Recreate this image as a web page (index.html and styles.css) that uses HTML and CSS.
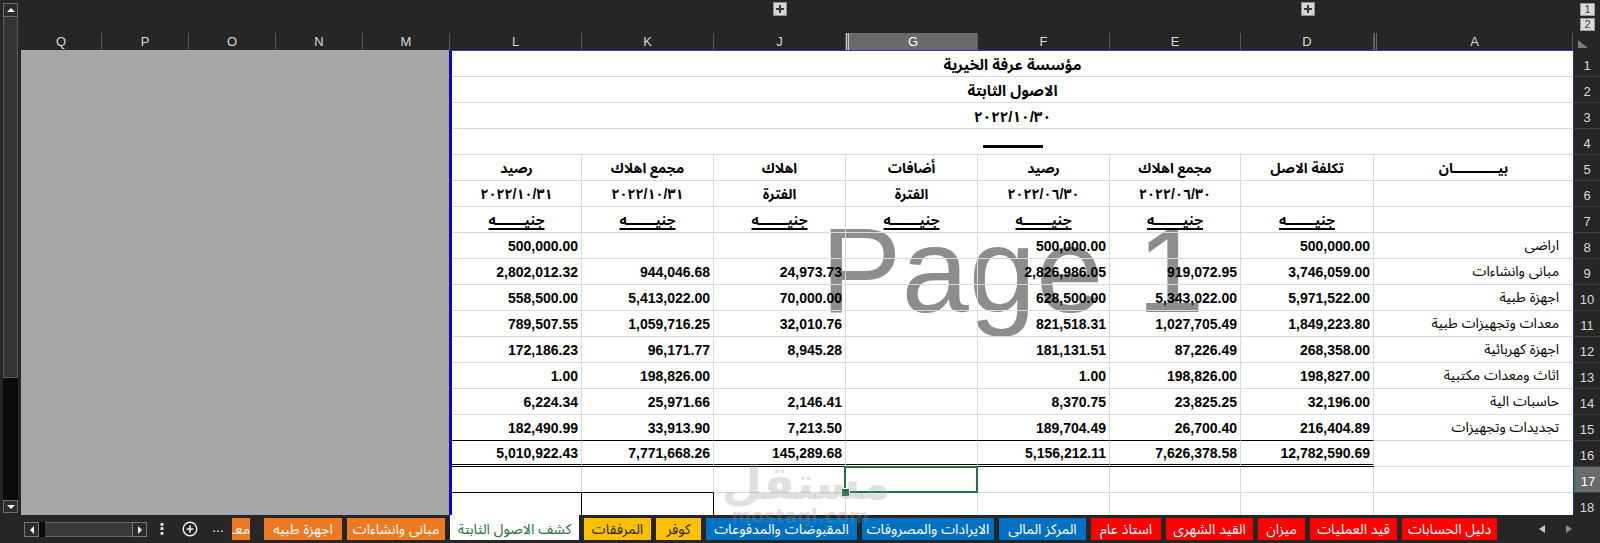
FILE: index.html
```html
<!DOCTYPE html>
<html lang="ar">
<head>
<meta charset="utf-8">
<title>كشف الاصول الثابتة</title>
<link rel="stylesheet" href="styles.css">
</head>
<body>
<div class="window">
  <div class="main">
    <div class="vscroll">
      <div class="vs-btn vs-up"></div>
      <div class="vs-thumb"></div>
      <div class="vs-track"></div>
      <div class="vs-btn vs-down"></div>
    </div>
    <div class="content">
      <div class="outline-bar">
        <div class="ob-plus ob-j"><svg width="12" height="12" viewBox="0 0 12 12"><path d="M2 6h8M6 2v8" stroke="#3a3a3a" stroke-width="2"/></svg></div>
        <div class="ob-plus ob-d"><svg width="12" height="12" viewBox="0 0 12 12"><path d="M2 6h8M6 2v8" stroke="#3a3a3a" stroke-width="2"/></svg></div>
        <div class="ob-levels">
          <div class="ob-lv">1</div>
          <div class="ob-lv">2</div>
        </div>
      </div>
      <div class="col-headers">
        <div class="ch">Q</div>
        <div class="ch">P</div>
        <div class="ch">O</div>
        <div class="ch">N</div>
        <div class="ch">M</div>
        <div class="ch">L</div>
        <div class="ch">K</div>
        <div class="ch">J</div>
        <div class="ch ch-sel">G</div>
        <div class="ch">F</div>
        <div class="ch">E</div>
        <div class="ch">D</div>
        <div class="ch ch-hidden">A</div>
        <div class="ch ch-corner"><svg width="10" height="8" viewBox="0 0 10 8"><path d="M0 0L10 8H0Z" fill="#7c7c7c"/></svg></div>
      </div>
      <div class="sheet-area">
        <div class="grey"></div>
        <div class="page">
          <div class="page-wm">Page 1</div>

          <div class="c title">مؤسسة عرفة الخيرية</div>
          <div class="c title">الاصول الثابتة</div>
          <div class="c title">٢٠٢٢/١٠/٣٠</div>
          <div class="c title title-rule"><div class="rule"></div></div>

          <div class="c hd">رصيد</div>
          <div class="c hd">مجمع اهلاك</div>
          <div class="c hd">اهلاك</div>
          <div class="c hd">أضافات</div>
          <div class="c hd">رصيد</div>
          <div class="c hd">مجمع اهلاك</div>
          <div class="c hd">تكلفة الاصل</div>
          <div class="c hd last">بيـــــــــــان</div>

          <div class="c hd">٢٠٢٢/١٠/٣١</div>
          <div class="c hd">٢٠٢٢/١٠/٣١</div>
          <div class="c hd">الفترة</div>
          <div class="c hd">الفترة</div>
          <div class="c hd">٢٠٢٢/٠٦/٣٠</div>
          <div class="c hd">٢٠٢٢/٠٦/٣٠</div>
          <div class="c hd"></div>
          <div class="c hd last"></div>

          <div class="c hd unit"><span>جنيـــــــه</span></div>
          <div class="c hd unit"><span>جنيـــــــه</span></div>
          <div class="c hd unit"><span>جنيـــــــه</span></div>
          <div class="c hd unit"><span>جنيـــــــه</span></div>
          <div class="c hd unit"><span>جنيـــــــه</span></div>
          <div class="c hd unit"><span>جنيـــــــه</span></div>
          <div class="c hd unit"><span>جنيـــــــه</span></div>
          <div class="c hd last"></div>

          <div class="c num">500,000.00</div>
          <div class="c num"></div>
          <div class="c num"></div>
          <div class="c num"></div>
          <div class="c num">500,000.00</div>
          <div class="c num"></div>
          <div class="c num">500,000.00</div>
          <div class="c lbl last">اراضى</div>

          <div class="c num">2,802,012.32</div>
          <div class="c num">944,046.68</div>
          <div class="c num">24,973.73</div>
          <div class="c num"></div>
          <div class="c num">2,826,986.05</div>
          <div class="c num">919,072.95</div>
          <div class="c num">3,746,059.00</div>
          <div class="c lbl last">مبانى وانشاءات</div>

          <div class="c num">558,500.00</div>
          <div class="c num">5,413,022.00</div>
          <div class="c num">70,000.00</div>
          <div class="c num"></div>
          <div class="c num">628,500.00</div>
          <div class="c num">5,343,022.00</div>
          <div class="c num">5,971,522.00</div>
          <div class="c lbl last">اجهزة طبية</div>

          <div class="c num">789,507.55</div>
          <div class="c num">1,059,716.25</div>
          <div class="c num">32,010.76</div>
          <div class="c num"></div>
          <div class="c num">821,518.31</div>
          <div class="c num">1,027,705.49</div>
          <div class="c num">1,849,223.80</div>
          <div class="c lbl last">معدات وتجهيزات طبية</div>

          <div class="c num">172,186.23</div>
          <div class="c num">96,171.77</div>
          <div class="c num">8,945.28</div>
          <div class="c num"></div>
          <div class="c num">181,131.51</div>
          <div class="c num">87,226.49</div>
          <div class="c num">268,358.00</div>
          <div class="c lbl last">اجهزة كهربائية</div>

          <div class="c num">1.00</div>
          <div class="c num">198,826.00</div>
          <div class="c num"></div>
          <div class="c num"></div>
          <div class="c num">1.00</div>
          <div class="c num">198,826.00</div>
          <div class="c num">198,827.00</div>
          <div class="c lbl last">اثاث ومعدات مكتبية</div>

          <div class="c num">6,224.34</div>
          <div class="c num">25,971.66</div>
          <div class="c num">2,146.41</div>
          <div class="c num"></div>
          <div class="c num">8,370.75</div>
          <div class="c num">23,825.25</div>
          <div class="c num">32,196.00</div>
          <div class="c lbl last">حاسبات الية</div>

          <div class="c num pre-total">182,490.99</div>
          <div class="c num pre-total">33,913.90</div>
          <div class="c num pre-total">7,213.50</div>
          <div class="c num pre-total"></div>
          <div class="c num pre-total">189,704.49</div>
          <div class="c num pre-total">26,700.40</div>
          <div class="c num pre-total">216,404.89</div>
          <div class="c lbl last">تجديدات وتجهيزات</div>

          <div class="c num total">5,010,922.43</div>
          <div class="c num total">7,771,668.26</div>
          <div class="c num total">145,289.68</div>
          <div class="c num total"></div>
          <div class="c num total">5,156,212.11</div>
          <div class="c num total">7,626,378.58</div>
          <div class="c num total">12,782,590.69</div>
          <div class="c last"></div>

          <div class="c box-top"></div>
          <div class="c box-top"></div>
          <div class="c"></div>
          <div class="c active"></div>
          <div class="c"></div>
          <div class="c"></div>
          <div class="c"></div>
          <div class="c last"></div>

          <div class="c box-side"></div>
          <div class="c box-side"></div>
          <div class="c"></div>
          <div class="c"></div>
          <div class="c"></div>
          <div class="c"></div>
          <div class="c"></div>
          <div class="c last"></div>
        </div>
        <div class="rowhead">
          <div class="rh">1</div>
          <div class="rh">2</div>
          <div class="rh">3</div>
          <div class="rh">4</div>
          <div class="rh">5</div>
          <div class="rh">6</div>
          <div class="rh">7</div>
          <div class="rh">8</div>
          <div class="rh">9</div>
          <div class="rh">10</div>
          <div class="rh">11</div>
          <div class="rh">12</div>
          <div class="rh">13</div>
          <div class="rh">14</div>
          <div class="rh">15</div>
          <div class="rh">16</div>
          <div class="rh rh-sel">17</div>
          <div class="rh">18</div>
        </div>
      </div>
    </div>
  </div>

  <div class="tabbar">
    <div class="hscroll">
      <div class="hs-btn hs-left"></div>
      <div class="hs-thumb"></div>
      <div class="hs-track"></div>
      <div class="hs-btn hs-right"></div>
    </div>
    <div class="tb-icon tb-dots">⋮</div>
    <div class="tb-icon tb-add"><svg width="16" height="16" viewBox="0 0 16 16"><circle cx="8" cy="8" r="6.8" fill="none" stroke="#f0f0f0" stroke-width="1.4"/><path d="M4.6 8h6.8M8 4.6v6.8" stroke="#f0f0f0" stroke-width="1.6"/></svg></div>
    <div class="tb-icon tb-more">...</div>
    <div class="tabs">
      <div class="tab t-orange t-cut">معـ</div>
      <div class="tab t-orange">اجهزة طبيه</div>
      <div class="tab t-orange">مبانى وانشاءات</div>
      <div class="tab t-active">كشف الاصول الثابتة</div>
      <div class="tab t-yellow">المرفقات</div>
      <div class="tab t-yellow">كوفر</div>
      <div class="tab t-blue">المقبوضات والمدفوعات</div>
      <div class="tab t-blue">الايرادات والمصروفات</div>
      <div class="tab t-blue">المركز المالى</div>
      <div class="tab t-red">استاذ عام</div>
      <div class="tab t-red">القيد الشهرى</div>
      <div class="tab t-red">ميزان</div>
      <div class="tab t-red">قيد العمليات</div>
      <div class="tab t-red">دليل الحسابات</div>
    </div>
    <div class="tb-arrows">
      <svg width="6" height="8" viewBox="0 0 6 8"><path d="M6 0V8L0 4Z" fill="#c8c8c8"/></svg>
      <svg width="6" height="8" viewBox="0 0 6 8"><path d="M0 0V8L6 4Z" fill="#8a8a8a"/></svg>
    </div>
  </div>

  <div class="mostaql">
    <div class="mq-ar">مستقل</div>
    <div class="mq-en">mostaql.com</div>
  </div>
</div>
</body>
</html>
```

FILE: styles.css
```css
* { box-sizing: border-box; }

html, body {
  margin: 0;
  padding: 0;
}

body {
  width: 1600px;
  height: 543px;
  overflow: hidden;
  background: #262626;
  font-family: "Liberation Sans", "Noto Sans Arabic", "DejaVu Sans", sans-serif;
}

.window {
  --cols: 81px 87px 87px 87px 87px 132px 132px 132px 132px 132px 131px 133px 199px 27px;
  position: relative;
  width: 1600px;
  height: 543px;
  display: flex;
  flex-direction: column;
}

.main {
  display: flex;
  height: 515px;
}

/* vertical scrollbar */
.vscroll {
  width: 15px;
  margin: 3px 3px 2px 3px;
  display: flex;
  flex-direction: column;
}

.vs-btn {
  height: 14px;
  border: 1px solid #6c6c6c;
  background: #2d2d2d;
  display: flex;
  align-items: center;
  justify-content: center;
}

.vs-up::before {
  content: "";
  border-left: 4px solid transparent;
  border-right: 4px solid transparent;
  border-bottom: 4px solid #f2f2f2;
}

.vs-down {
  height: 13px;
}

.vs-down::before {
  content: "";
  border-left: 4px solid transparent;
  border-right: 4px solid transparent;
  border-top: 4px solid #f2f2f2;
}

.vs-thumb {
  height: 361px;
  background: #343434;
  border: 1px solid #5a5a5a;
  border-top: none;
}

.vs-track {
  flex: 1;
  background: #0b0b0b;
}

.content {
  width: 1579px;
  display: flex;
  flex-direction: column;
}

/* outline bar */
.outline-bar {
  height: 33px;
  display: grid;
  grid-template-columns: var(--cols);
  grid-template-rows: 33px;
}

.ob-plus {
  grid-row: 1;
  justify-self: center;
  align-self: start;
  margin-top: 2px;
  width: 14px;
  height: 14px;
  background: #d6d6d6;
  border: 1px solid #909090;
  display: flex;
  align-items: center;
  justify-content: center;
}

.ob-j { grid-column: 8; }
.ob-d { grid-column: 12; }

.ob-levels {
  grid-row: 1;
  grid-column: 14;
  padding: 3px 0 0 7px;
  display: flex;
  flex-direction: column;
  gap: 2px;
}

.ob-lv {
  width: 15px;
  height: 13px;
  background: #dadada;
  border: 1px solid #9a9a9a;
  color: #404040;
  font-size: 11px;
  line-height: 11px;
  text-align: center;
}

/* column headers */
.col-headers {
  height: 17px;
  display: grid;
  grid-template-columns: var(--cols);
}

.ch {
  color: #d8d8d8;
  font-size: 13px;
  line-height: 17px;
  text-align: center;
  border-right: 1px solid #555;
}

.ch-sel {
  background: #6a6a6a;
  color: #fff;
  border-left: 3px double #c8c8c8;
  border-bottom: 1px solid #3f8a5e;
}

.ch-hidden {
  border-left: 3px double #6a6a6a;
}

.ch-corner {
  border-right: none;
  display: flex;
  align-items: flex-end;
  padding: 0 0 3px 5px;
}

/* sheet area */
.sheet-area {
  display: flex;
  height: 465px;
}

.grey {
  width: 428px;
  background: #a6a6a6;
}

.page {
  position: relative;
  width: 1125px;
  background: #fff;
  border-left: 3px solid #0a0ac4;
  border-top: 1px solid #3a3aa6;
  border-right: 1px solid #2c2c9c;
  overflow: hidden;
  display: grid;
  grid-template-columns: 130px 132px 132px 132px 132px 131px 133px 199px;
  grid-auto-rows: 26px;
  align-content: start;
}

.page-wm {
  position: absolute;
  left: 0;
  right: 0;
  top: 159px;
  text-align: center;
  font-family: "Liberation Sans", sans-serif;
  font-size: 121px;
  line-height: 1;
  color: #8d8d8d;
  z-index: 0;
}

.c {
  position: relative;
  z-index: 1;
  border-right: 1px solid #d9d9d9;
  border-bottom: 1px solid #d9d9d9;
  display: flex;
  align-items: center;
  justify-content: flex-end;
  padding: 0 4px;
  white-space: nowrap;
  color: #000;
  font-size: 14px;
  font-weight: bold;
}

.c.last {
  border-right: none;
}

.title {
  grid-column: 1 / -1;
  border-right: none;
  justify-content: center;
  font-size: 15px;
  padding-top: 2px;
}

.title-rule {
  align-items: flex-start;
}

.rule {
  width: 60px;
  height: 3px;
  margin-top: 14px;
  background: #000;
}

.hd {
  justify-content: center;
  font-size: 14px;
  padding-top: 2px;
}

.unit span {
  text-decoration: underline;
  text-decoration-thickness: 2px;
  text-underline-offset: 3px;
}

.num {
  padding-right: 3px;
  font-size: 14px;
}

.lbl {
  direction: rtl;
  justify-content: flex-start;
  padding: 0 14px 0 0;
  font-weight: normal;
  font-size: 14px;
}

.pre-total {
  border-bottom-color: #000;
}

.total {
  border-bottom: 3px double #000;
}

.box-top {
  border-bottom-color: #000;
}

.box-side {
  border-right-color: #000;
}

.c.active {
  z-index: 2;
}

.c.active::after {
  content: "";
  position: absolute;
  top: -1px;
  bottom: -1px;
  left: -2px;
  right: -1px;
  border: 2px solid #217346;
}

.c.active::before {
  content: "";
  position: absolute;
  left: -5px;
  bottom: -5px;
  width: 7px;
  height: 7px;
  background: #217346;
  border: 1px solid #fff;
  z-index: 1;
}

/* row headers */
.rowhead {
  width: 26px;
  padding-top: 1px;
  overflow: hidden;
}

.rh {
  height: 26px;
  border-bottom: 1px solid #3e3e3e;
  color: #d9d9d9;
  font-size: 13px;
  text-align: center;
  padding-top: 7px;
}

.rh-sel {
  background: #6b6b6b;
  color: #fff;
  border-left: 2px solid #2f7d52;
}

/* tab bar */
.tabbar {
  height: 28px;
  display: flex;
  align-items: flex-start;
  padding: 3px 0 0 24px;
  background: #262626;
}

.hscroll {
  display: flex;
  width: 123px;
  height: 15px;
  margin-top: 4px;
}

.hs-btn {
  width: 15px;
  border: 1px solid #777;
  background: #2b2b2b;
  display: flex;
  align-items: center;
  justify-content: center;
}

.hs-left::before {
  content: "";
  border-top: 4px solid transparent;
  border-bottom: 4px solid transparent;
  border-right: 4px solid #f2f2f2;
}

.hs-right::before {
  content: "";
  border-top: 4px solid transparent;
  border-bottom: 4px solid transparent;
  border-left: 4px solid #f2f2f2;
}

.hs-thumb {
  width: 6px;
  background: #0a0a0a;
}

.hs-track {
  flex: 1;
  background: #3a3a3a;
  border-top: 1px solid #666;
  border-bottom: 1px solid #666;
}

.tb-icon {
  width: 16px;
  height: 22px;
  display: flex;
  align-items: center;
  justify-content: center;
  color: #e8e8e8;
  font-size: 15px;
}

.tb-dots {
  margin-left: 7px;
  font-weight: bold;
}

.tb-add {
  margin-left: 12px;
}

.tb-more {
  margin-left: 12px;
  font-size: 14px;
  padding-bottom: 4px;
}

.tabs {
  display: flex;
  margin-left: 6px;
  gap: 5px;
}

.tab {
  position: relative;
  height: 22px;
  display: flex;
  align-items: center;
  justify-content: center;
  direction: rtl;
  white-space: nowrap;
  overflow: hidden;
  font-size: 14px;
  color: #fff;
}

.t-orange { background: #ec7a22; }
.t-yellow { background: #ffc000; color: #262626; }
.t-blue { background: #0070c0; }
.t-red { background: #ff0000; }

.t-active {
  background: #fff;
  color: #1f6e40;
  height: 25px;
  margin-top: -3px;
  padding-top: 3px;
}

.t-cut {
  justify-content: flex-start;
  margin-right: 9px;
}

.tabs .tab:nth-child(1) { width: 18px; }
.tabs .tab:nth-child(2) { width: 78px; }
.tabs .tab:nth-child(3) { width: 98px; }
.tabs .tab:nth-child(4) { width: 129px; }
.tabs .tab:nth-child(5) { width: 67px; }
.tabs .tab:nth-child(6) { width: 45px; }
.tabs .tab:nth-child(7) { width: 151px; }
.tabs .tab:nth-child(8) { width: 132px; }
.tabs .tab:nth-child(9) { width: 87px; }
.tabs .tab:nth-child(10) { width: 70px; }
.tabs .tab:nth-child(11) { width: 87px; }
.tabs .tab:nth-child(12) { width: 47px; }
.tabs .tab:nth-child(13) { width: 87px; }
.tabs .tab:nth-child(14) { width: 95px; }

.tb-arrows {
  margin-left: auto;
  margin-right: 28px;
  height: 22px;
  display: flex;
  align-items: center;
  gap: 21px;
}

/* site watermark */
.mostaql {
  position: absolute;
  left: 722px;
  top: 455px;
  width: 156px;
  text-align: center;
  color: rgba(145, 145, 145, 0.3);
  pointer-events: none;
  z-index: 5;
  font-family: "DejaVu Sans", sans-serif;
  font-weight: bold;
}

.mq-ar {
  font-size: 46px;
  line-height: 56px;
}

.mq-en {
  font-size: 19px;
  line-height: 18px;
  margin-top: -4px;
}
```
